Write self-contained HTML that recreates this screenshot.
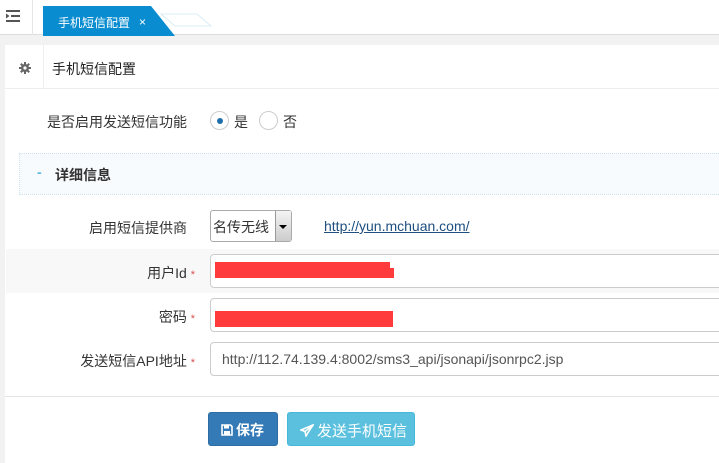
<!DOCTYPE html>
<html><head><meta charset="utf-8"><style>
*{box-sizing:border-box;margin:0;padding:0}
body{width:719px;height:463px;overflow:hidden;background:#f2f2f2;font-family:"Liberation Sans","Noto Sans CJK SC",sans-serif;font-size:14px;color:#333;position:relative}
.abs{position:absolute}
.top{left:0;top:0;width:719px;height:35px;background:#fff;border-bottom:1px solid #ddd}
.panel{left:5px;top:45px;width:714px;height:418px;background:#fff}
.lbl{text-align:right;width:190px}
.inp{border:1px solid #ccc;border-radius:4px;background:#fff;height:34px}
.red{background:#ff3b3b}
.star{color:#d9534f;font-size:11px}
</style></head><body>
<div class="abs top"></div>
<div class="abs" style="left:32px;top:0;width:1px;height:35px;background:#e5e5e5"></div>
<svg class="abs" style="left:6px;top:10px" width="14" height="12" viewBox="0 0 14 12"><g fill="#555"><rect x="0" y="0" width="14" height="2"/><rect x="5" y="5" width="9" height="2"/><rect x="0" y="10" width="14" height="2"/><path d="M0 3.5L3.5 6L0 8.5z"/></g></svg>
<svg class="abs" style="left:43px;top:6px" width="170" height="30" viewBox="0 0 170 30"><path d="M118 8L154 8L168 20L132 20Z" fill="#fff" stroke="#d8ecf7"/><path d="M0 0L108 0L132 30L0 30Z" fill="#0a8dd0"/></svg>
<div class="abs" style="left:58px;top:14px;color:#fff;font-size:12px">手机短信配置</div>
<div class="abs" style="left:139px;top:15px;color:#fff;font-size:12px">×</div>
<div class="abs panel"></div>
<div class="abs" style="left:5px;top:88px;width:714px;height:1px;background:#eee"></div>
<div class="abs" style="left:43px;top:45px;width:1px;height:43px;background:#eee"></div>
<svg class="abs" style="left:19px;top:62px" width="12" height="12" viewBox="0 0 12 12"><g fill="#666"><circle cx="6" cy="6" r="4"/><rect x="5" y="0" width="2" height="12"/><rect x="0" y="5" width="12" height="2"/><rect x="5" y="0" width="2" height="12" transform="rotate(45 6 6)"/><rect x="5" y="0" width="2" height="12" transform="rotate(-45 6 6)"/></g><circle cx="6" cy="6" r="1.6" fill="#fff"/></svg>
<div class="abs" style="left:52px;top:59px;color:#222">手机短信配置</div>
<div class="abs lbl" style="left:-3px;top:112px">是否启用发送短信功能</div>
<div class="abs" style="left:210px;top:111px;width:19px;height:19px;border:1px solid #ccc;border-radius:50%"><div style="margin:5.5px;width:6px;height:6px;border-radius:50%;background:#1f6faa"></div></div>
<div class="abs" style="left:234px;top:112px">是</div>
<div class="abs" style="left:259px;top:111px;width:19px;height:19px;border:1px solid #ccc;border-radius:50%"></div>
<div class="abs" style="left:283px;top:112px">否</div>
<div class="abs" style="left:19px;top:153px;width:700px;height:42px;background:#f8fbfd;border:1px dotted #cfe3ef;border-right:none"></div>
<div class="abs" style="left:37px;top:164px;color:#5bb8e8;font-weight:bold">-</div>
<div class="abs" style="left:55px;top:165px;font-weight:bold;color:#333">详细信息</div>
<div class="abs lbl" style="left:-3px;top:218px">启用短信提供商</div>
<div class="abs" style="left:210px;top:210px;width:82px;height:32px;border:1px solid #aaa;border-radius:3px;background:#fff"></div>
<div class="abs" style="left:213px;top:217px">名传无线</div>
<div class="abs" style="left:275px;top:211px;width:16px;height:30px;background:linear-gradient(#f4f4f4,#ccc);border-left:1px solid #999"></div>
<div class="abs" style="left:279px;top:225px;width:0;height:0;border-left:4px solid transparent;border-right:4px solid transparent;border-top:4px solid #000"></div>
<div class="abs" style="left:324px;top:218px;color:#1e4f80;text-decoration:underline">http://yun.mchuan.com/</div>
<div class="abs" style="left:6px;top:249px;width:713px;height:44px;background:#f8f8f8"></div>
<div class="abs lbl" style="left:5px;top:263px">用户Id <span class="star">*</span></div>
<div class="abs inp" style="left:210px;top:254px;width:520px"></div>
<div class="abs red" style="left:215px;top:262px;width:175px;height:8px"></div>
<div class="abs red" style="left:215px;top:268px;width:179px;height:10px"></div>
<div class="abs lbl" style="left:5px;top:307px">密码 <span class="star">*</span></div>
<div class="abs inp" style="left:210px;top:298px;width:520px"></div>
<div class="abs red" style="left:215px;top:311px;width:178px;height:16px"></div>
<div class="abs lbl" style="left:5px;top:351px">发送短信API地址 <span class="star">*</span></div>
<div class="abs inp" style="left:210px;top:342px;width:520px"></div>
<div class="abs" style="left:222px;top:351px;color:#555">http://112.74.139.4:8002/sms3_api/jsonapi/jsonrpc2.jsp</div>
<div class="abs" style="left:5px;top:396px;width:714px;height:1px;background:#e5e5e5"></div>
<div class="abs" style="left:208px;top:412px;width:70px;height:34px;background:#337ab7;border:1px solid #2e6da4;border-radius:3px;color:#fff;padding:7px 0 0 12px;font-weight:bold"><svg width="12" height="12" viewBox="0 0 12 12" style="vertical-align:-1px;margin-right:3px"><path d="M1 1H9.5L11 2.5V11H1Z" fill="none" stroke="#fff" stroke-width="1.6"/><rect x="3" y="1" width="5" height="3.5" fill="#fff"/><rect x="3" y="7" width="6" height="4" fill="#fff"/></svg>保存</div>
<div class="abs" style="left:287px;top:412px;width:128px;height:34px;background:#5bc0de;border:1px solid #46b8da;border-radius:3px;color:#fff;padding:7px 0 0 12px;font-size:15px"><svg width="14" height="13" viewBox="0 0 14 13" style="vertical-align:-1px;margin-right:3px"><path d="M13 1L1 6L5 7.5L6 12L8 8.5Z M5 7.5L13 1" fill="none" stroke="#fff" stroke-width="1.6"/></svg>发送手机短信</div>
</body></html>
